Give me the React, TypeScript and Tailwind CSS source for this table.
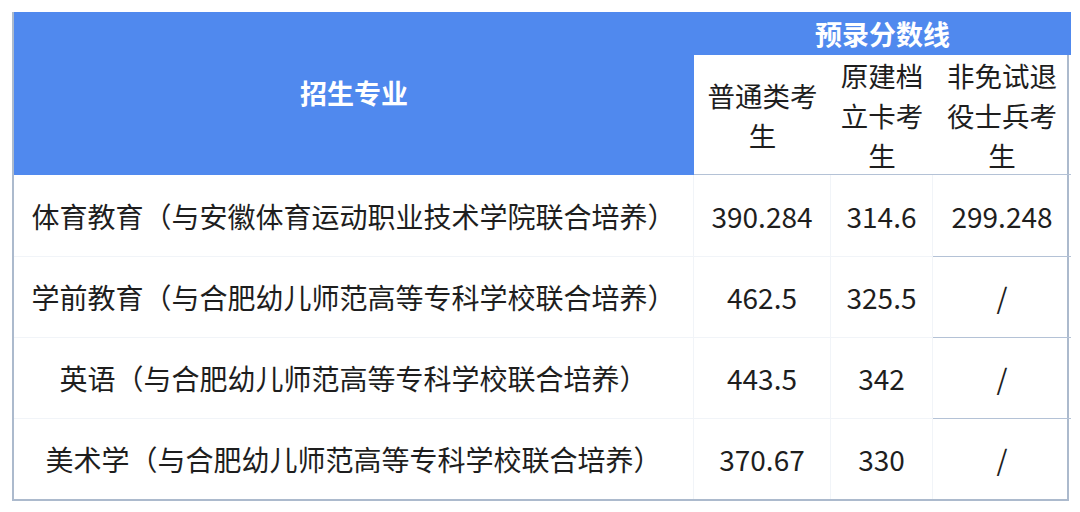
const rows = [
  { name: "体育教育（与安徽体育运动职业技术学院联合培养）", a: "390.284", b: "314.6", c: "299.248" },
  { name: "学前教育（与合肥幼儿师范高等专科学校联合培养）", a: "462.5", b: "325.5", c: "/" },
  { name: "英语（与合肥幼儿师范高等专科学校联合培养）", a: "443.5", b: "342", c: "/" },
  { name: "美术学（与合肥幼儿师范高等专科学校联合培养）", a: "370.67", b: "330", c: "/" },
];

export default function App() {
  return (
    <div
      className="h-[512px] w-[1080px] bg-white pl-[12px] pt-[12px]"
      style={{ fontFamily: '"Noto Sans CJK SC", "Noto Sans", sans-serif' }}
    >
      <div className="grid w-[1057px] grid-cols-[680px_137px_102px_138px] border-x-2 border-b-2 border-[#acbacd] text-[28px] text-[#1e1e1e]">
        <div className="row-span-2 flex h-[163px] items-center justify-center bg-[#5089ee] text-[27px] font-bold text-white">
          招生专业
        </div>
        <div className="col-span-3 flex h-[43px] items-center justify-center bg-[#5089ee] text-[27px] font-bold leading-none text-white">
          预录分数线
        </div>
        <div className="flex h-[120px] items-center justify-center border-b border-[#b4c2d6] px-2 text-center text-[27.5px] leading-[40px]">
          <span className="w-[112px]">普通类考生</span>
        </div>
        <div className="flex h-[120px] items-center justify-center border-b border-[#b4c2d6] text-center text-[27.5px] leading-[40px]">
          <span className="w-[84px]">原建档立卡考生</span>
        </div>
        <div className="flex h-[120px] items-center justify-center border-b border-[#b4c2d6] text-center text-[27.5px] leading-[40px]">
          <span className="w-[112px]">非免试退役士兵考生</span>
        </div>
        {rows.map((r, i) => (
          <div key={i} className="contents">
            <div
              className={`flex h-[81px] items-center justify-center whitespace-nowrap border-r border-[#f1f4f8] ${i > 0 ? "border-t border-[#b4c2d6]" : ""}`}
            >
              {r.name}
            </div>
            <div
              className={`flex h-[81px] items-center justify-center border-r border-[#f1f4f8] ${i > 0 ? "border-t border-[#b4c2d6]" : ""}`}
            >
              {r.a}
            </div>
            <div
              className={`flex h-[81px] items-center justify-center border-r border-[#f1f4f8] ${i > 0 ? "border-t border-[#b4c2d6]" : ""}`}
            >
              {r.b}
            </div>
            <div
              className={`flex h-[81px] items-center justify-center ${i > 0 ? "border-t border-[#b4c2d6]" : ""}`}
            >
              {r.c}
            </div>
          </div>
        ))}
      </div>
    </div>
  );
}
